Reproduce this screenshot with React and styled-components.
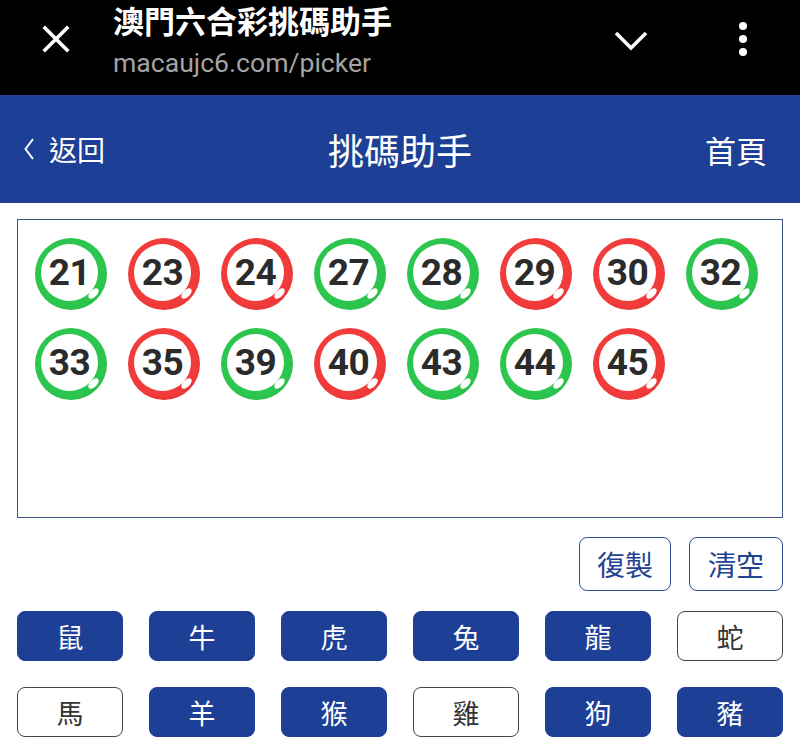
import React from 'react';
import styled, { createGlobalStyle } from 'styled-components';

const GlobalStyle = createGlobalStyle`
  body {
    margin: 0;
    background: #fff;
    font-family: Roboto, "Noto Sans CJK TC", sans-serif;
  }
`;

const BLUE = '#1d3f95';

const TopBar = styled.div`
  display: flex;
  align-items: flex-start;
  height: 95px;
  background: #000;
  padding-right: 53px;
`;

const CloseBtn = styled.svg`
  width: 28px;
  height: 28px;
  margin: 25px 43px 0 42px;
`;

const TitleBlock = styled.div`
  flex: 1;
`;

const PageTitle = styled.div`
  font-family: "Noto Sans CJK TC", sans-serif;
  font-weight: 700;
  font-size: 31px;
  line-height: 40px;
  color: #fff;
`;

const Url = styled.div`
  margin-top: 8px;
  font-family: Roboto, sans-serif;
  font-size: 26.6px;
  line-height: 30px;
  color: #a3a3a3;
`;

const Chevron = styled.svg`
  width: 34px;
  height: 20px;
  margin: 31px 91px 0 0;
`;

const Dots = styled.svg`
  width: 8px;
  height: 34px;
  margin-top: 22px;
`;

const Header = styled.header`
  display: grid;
  grid-template-columns: 1fr auto 1fr;
  align-items: center;
  height: 108px;
  background: ${BLUE};
  color: #fff;
  font-family: "Noto Sans CJK TC", sans-serif;
`;

const Back = styled.div`
  display: flex;
  align-items: center;
  gap: 15px;
  padding-left: 24px;
  font-size: 28px;
`;

const HeaderTitle = styled.h1`
  margin: 0;
  font-size: 36px;
  font-weight: 400;
`;

const Home = styled.div`
  justify-self: end;
  padding-right: 33px;
  font-size: 31px;
`;

const Main = styled.main`
  padding: 16px 17px 0;
`;

const Board = styled.div`
  display: flex;
  flex-wrap: wrap;
  align-content: flex-start;
  gap: 18px 21px;
  height: 299px;
  box-sizing: border-box;
  padding: 18px 17px;
  border: 1.5px solid #3d5680;
`;

/* coloured ring with a white face pushed a little up-left, and a small
   glint on the thick lower-right part of the ring */
const Ball = styled.div`
  position: relative;
  display: flex;
  align-items: flex-start;
  width: 72px;
  height: 72px;
  box-sizing: border-box;
  padding: 6px 0 0 6px;
  border-radius: 50%;
  background: radial-gradient(circle at 48% 46%, ${(p) => p.$color} 62%, ${(p) => p.$edge} 100%);

  &::after {
    content: '';
    position: absolute;
    left: 52px;
    top: 52px;
    width: 13px;
    height: 7px;
    border-radius: 50%;
    background: #fff;
    transform: rotate(-45deg);
  }
`;

const Face = styled.span`
  display: flex;
  align-items: center;
  justify-content: center;
  width: 57px;
  height: 57px;
  border-radius: 50%;
  background: #fff;
  font-family: Roboto, sans-serif;
  font-weight: 700;
  font-size: 37px;
  letter-spacing: -0.5px;
  color: #2b2b2b;
`;

const Actions = styled.div`
  display: flex;
  justify-content: flex-end;
  gap: 18px;
  margin-top: 19px;
`;

const ActionButton = styled.button`
  width: ${(p) => p.$w}px;
  height: 54px;
  padding: 0;
  border: 1.5px solid #2f4f8c;
  border-radius: 8px;
  background: #fff;
  color: #22438f;
  font-family: "Noto Sans CJK TC", sans-serif;
  font-size: 28px;
`;

const ZodiacGrid = styled.div`
  display: grid;
  grid-template-columns: repeat(6, 1fr);
  gap: 26px;
  margin-top: 20px;
`;

const Zodiac = styled.button`
  height: 50px;
  padding: 0;
  border-radius: 8px;
  border: 1.5px solid ${(p) => (p.$on ? BLUE : '#444')};
  background: ${(p) => (p.$on ? BLUE : '#fff')};
  color: ${(p) => (p.$on ? '#fff' : '#333')};
  font-family: "Noto Sans CJK TC", sans-serif;
  font-size: 27px;
`;

const GREEN = ['#2cc64f', '#1fae41'];
const RED = ['#f23c3c', '#d92828'];

const picks = [
  [21, GREEN], [23, RED], [24, RED], [27, GREEN], [28, GREEN], [29, RED],
  [30, RED], [32, GREEN], [33, GREEN], [35, RED], [39, GREEN], [40, RED],
  [43, GREEN], [44, GREEN], [45, RED],
];

const zodiacs = [
  ['鼠', true], ['牛', true], ['虎', true], ['兔', true], ['龍', true], ['蛇', false],
  ['馬', false], ['羊', true], ['猴', true], ['雞', false], ['狗', true], ['豬', true],
];

export default function App() {
  return (
    <>
      <GlobalStyle />
      <TopBar>
        <CloseBtn viewBox="0 0 28 28">
          <path d="M3 3 L25 25 M25 3 L3 25" stroke="#fff" strokeWidth="3.6" strokeLinecap="square" />
        </CloseBtn>
        <TitleBlock>
          <PageTitle>澳門六合彩挑碼助手</PageTitle>
          <Url>macaujc6.com/picker</Url>
        </TitleBlock>
        <Chevron viewBox="0 0 34 20">
          <path d="M2 2 L17 17 L32 2" fill="none" stroke="#fff" strokeWidth="3.6" />
        </Chevron>
        <Dots viewBox="0 0 8 34">
          <circle cx="4" cy="4" r="4" fill="#fff" />
          <circle cx="4" cy="17" r="4" fill="#fff" />
          <circle cx="4" cy="30" r="4" fill="#fff" />
        </Dots>
      </TopBar>

      <Header>
        <Back>
          <svg width="10" height="22" viewBox="0 0 10 22">
            <path d="M9 1 L1.5 11 L9 21" fill="none" stroke="#fff" strokeWidth="2" />
          </svg>
          返回
        </Back>
        <HeaderTitle>挑碼助手</HeaderTitle>
        <Home>首頁</Home>
      </Header>

      <Main>
        <Board>
          {picks.map(([n, [c, e]]) => (
            <Ball key={n} $color={c} $edge={e}>
              <Face>{n}</Face>
            </Ball>
          ))}
        </Board>

        <Actions>
          <ActionButton $w={92}>復製</ActionButton>
          <ActionButton $w={94}>清空</ActionButton>
        </Actions>

        <ZodiacGrid>
          {zodiacs.map(([name, on]) => (
            <Zodiac key={name} $on={on}>{name}</Zodiac>
          ))}
        </ZodiacGrid>
      </Main>
    </>
  );
}
